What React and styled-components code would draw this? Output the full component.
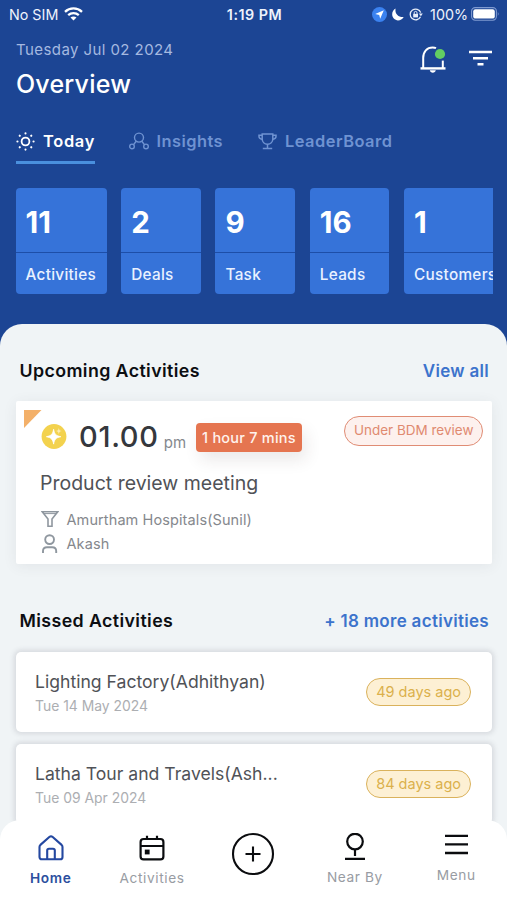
/**
 * External dependencies
 */
import styled, { createGlobalStyle } from 'styled-components';

const GlobalStyle = createGlobalStyle`
  * {
    box-sizing: border-box;
  }

  body {
    margin: 0;
    font-family: Inter, 'Liberation Sans', sans-serif;
    overflow: hidden;
  }

  svg {
    display: block;
    flex: none;
  }
`;

const Screen = styled.div`
  position: relative;
  display: flex;
  flex-direction: column;
  width: 507px;
  height: 900px;
  overflow: hidden;
  background: #1c4594;
`;

const StatusBar = styled.div`
  display: grid;
  grid-template-columns: 1fr auto 1fr;
  align-items: center;
  height: 28px;
  flex: none;
  padding: 0 7px 0 9px;
  color: #eef3fc;
  font-size: 14.3px;
`;

const StatusGroup = styled.div`
  display: flex;
  align-items: center;
  gap: ${({ $gap }) => $gap}px;
  justify-content: ${({ $end }) => ($end ? 'flex-end' : 'flex-start')};
`;

const Clock = styled.span`
  font-weight: 600;
  letter-spacing: 0.5px;
`;

const BatteryLevel = styled.span`
  margin: 0 -2px 0 2px;
`;

const Header = styled.header`
  display: flex;
  justify-content: space-between;
  flex: none;
  height: 92px;
  padding: 12px 15px 0 16px;
`;

const Today = styled.div`
  color: #a5b9e0;
  font-size: 15px;
  line-height: 20px;
  letter-spacing: 0.42px;
`;

const Title = styled.h1`
  margin: 8px 0 0;
  color: #fff;
  font-size: 25px;
  line-height: 32px;
  font-weight: 500;
  letter-spacing: 0.2px;
`;

const HeaderActions = styled.div`
  display: flex;
  align-items: flex-start;
  gap: 23px;
  padding-top: 5px;
`;

const Tabs = styled.nav`
  display: flex;
  flex: none;
  height: 44px;
  padding-left: 16px;
`;

const Tab = styled.div`
  display: flex;
  align-items: center;
  gap: ${({ $gap }) => $gap}px;
  height: 44px;
  margin-right: ${({ $space }) => $space}px;
  border-bottom: 3px solid ${({ $active }) => ($active ? '#4a90de' : 'transparent')};
  padding-top: 1px;
  color: ${({ $active }) => ($active ? '#fff' : '#6f93d2')};
  font-size: 16.4px;
  font-weight: 600;
  letter-spacing: ${({ $spacing }) => $spacing}px;
`;

const Stats = styled.div`
  display: flex;
  flex: none;
  gap: 14.7px;
  margin: 24px 14.5px 0 15.5px;
  overflow: hidden;
`;

const Stat = styled.div`
  flex: none;
  width: ${({ $width }) => $width}px;
  height: 106px;
  border-radius: 4px;
  background: #3673d9;
  color: #fff;
`;

const StatValue = styled.div`
  height: 65px;
  padding: 2px 0 0 10px;
  border-bottom: 1px solid #1d4ea8;
  font-size: 29.5px;
  line-height: 65px;
  font-weight: 700;
`;

const StatLabel = styled.div`
  padding-left: 10px;
  color: #e9f1ff;
  font-size: 15.3px;
  line-height: 43px;
  font-weight: 500;
  letter-spacing: 0.3px;
  white-space: nowrap;
`;

const Sheet = styled.main`
  flex: 1;
  margin-top: 30px;
  padding: 0 15px 0 15.5px;
  border-radius: 22px 22px 0 0;
  background: #f0f4f6;
`;

const SectionHeader = styled.div`
  display: flex;
  align-items: center;
  justify-content: space-between;
  height: ${({ $height }) => $height}px;
  padding: ${({ $top }) => $top}px 3px 0 4px;
`;

const SectionTitle = styled.h2`
  margin: 0;
  color: #0c0e12;
  font-size: 17.8px;
  font-weight: 600;
  letter-spacing: 0.4px;
`;

const SectionLink = styled.a`
  padding-top: 2px;
  color: #3c73cc;
  font-size: 17px;
  font-weight: 600;
  letter-spacing: 0.3px;
`;

const MeetingCard = styled.article`
  position: relative;
  height: 163px;
  padding: 21px 9px 0 24.5px;
  background: #fff;
  border-radius: 2px;
  box-shadow: 0 2px 14px rgba(60, 60, 80, 0.08);
`;

const Corner = styled.svg`
  position: absolute;
  top: 9px;
  left: 8.5px;
`;

const MeetingTop = styled.div`
  display: flex;
  align-items: center;
  height: 29px;
`;

const Time = styled.div`
  margin-left: 12px;
  color: #35383d;
  font-size: 29px;
  font-weight: 500;
  letter-spacing: 0.7px;
`;

const Meridiem = styled.span`
  margin: 11px 10px 0 5px;
  color: #85888d;
  font-size: 15px;
`;

const Countdown = styled.div`
  height: 29px;
  margin-top: 2px;
  padding: 0 6px;
  border-radius: 4px;
  background: #e57550;
  box-shadow: 4px 8px 16px rgba(60, 40, 40, 0.1);
  color: #fff2ec;
  font-size: 14.5px;
  line-height: 29px;
  font-weight: 500;
  letter-spacing: 0.23px;
  white-space: nowrap;
`;

const ReviewPill = styled.div`
  height: 30px;
  margin: -11px 0 0 auto;
  padding: 0 8.5px;
  border: 1.5px solid #e08c74;
  border-radius: 15px;
  background: #fdf1ee;
  color: #e08a70;
  font-size: 13.5px;
  line-height: 27px;
  white-space: nowrap;
`;

const MeetingTitle = styled.div`
  margin: 20px 0 12px;
  color: #505257;
  font-size: 19.5px;
  line-height: 24px;
`;

const Detail = styled.div`
  display: flex;
  align-items: center;
  gap: 7.5px;
  height: 24.5px;
  padding-left: 1px;
  color: #85888d;
  font-size: 14.5px;
  letter-spacing: 0.1px;
`;

const MissedCard = styled.article`
  display: flex;
  align-items: center;
  justify-content: space-between;
  height: 80px;
  margin-bottom: 12px;
  padding: 0 21px 0 19.5px;
  border-radius: 5px;
  background: #fff;
  box-shadow: 0 0 5px 2px rgba(70, 70, 85, 0.15);
`;

const MissedName = styled.div`
  padding-top: 2px;
  color: #505257;
  font-size: 17.6px;
  line-height: 24px;
`;

const MissedDate = styled.div`
  margin-top: 1px;
  color: #acaeb2;
  font-size: 13.9px;
  line-height: 22px;
`;

const AgePill = styled.div`
  height: 28px;
  padding: 0 9px;
  border: 1.5px solid #dab25c;
  border-radius: 14px;
  background: #fdf0d4;
  color: #dbb04c;
  font-size: 14.5px;
  line-height: 25px;
  white-space: nowrap;
`;

const BottomBar = styled.nav`
  position: absolute;
  right: 0;
  bottom: 0;
  left: 0;
  display: grid;
  grid-template-columns: repeat(5, 101.4px);
  height: 80px;
  border-radius: 20px 20px 0 0;
  background: #fff;
`;

const BarItem = styled.div`
  display: flex;
  flex-direction: column;
  align-items: center;
  padding-top: ${({ $top }) => $top}px;
  color: ${({ $active }) => ($active ? '#2c4f9e' : '#989ca3')};
  font-size: 13.7px;
  line-height: 18px;
  font-weight: ${({ $active }) => ($active ? 600 : 400)};
  letter-spacing: 0.6px;
`;

const BarLabel = styled.span`
  margin-top: ${({ $gap }) => $gap}px;
`;

const stats = [
  { label: 'Activities', value: 11, width: 91 },
  { label: 'Deals', value: 2, width: 79.6 },
  { label: 'Task', value: 9, width: 79.6 },
  { label: 'Leads', value: 16, width: 79.6 },
  { label: 'Customers', value: 1, width: 102 },
];

const missed = [
  { name: 'Lighting Factory(Adhithyan)', date: 'Tue 14 May 2024', age: '49 days ago' },
  { name: 'Latha Tour and Travels(Ash...', date: 'Tue 09 Apr 2024', age: '84 days ago' },
];

function WifiIcon() {
  return (
    <svg width="19" height="14" viewBox="0 0 19 14" fill="none" stroke="#fff" strokeWidth="2.3">
      <path d="M1 4.8C5.8 0.3 13.2 0.3 18 4.8" />
      <path d="M4.2 8.2C7.2 5.5 11.8 5.5 14.8 8.2" />
      <path d="M9.5 13.6L6.5 10.6C8.2 9.1 10.8 9.1 12.5 10.6Z" fill="#fff" stroke="none" />
    </svg>
  );
}

function LocationIcon() {
  return (
    <svg width="15" height="15" viewBox="0 0 15 15">
      <circle cx="7.5" cy="7.5" r="7.5" fill="#3b82f0" />
      <path d="M11.8 3.2L8.2 11.8L7.2 7.9L3.2 6.9Z" fill="#fff" />
    </svg>
  );
}

function MoonIcon() {
  return (
    <svg width="12" height="13" viewBox="0 0 12 13">
      <path d="M3.6 0.6C2.6 5.4 6.2 9.6 11.7 9C9.7 12.7 4.6 13.6 1.8 10.6C-1 7.4 0 2.4 3.6 0.6Z" fill="#fff" />
    </svg>
  );
}

function RotationLockIcon() {
  return (
    <svg width="14" height="13" viewBox="0 0 14 13" fill="none" stroke="#e6edf9" strokeWidth="1.3">
      <path d="M11.5 8.8A5.4 5.4 0 1 1 11.7 4.6" />
      <path d="M9.9 5.6H13.8L11.9 8.2Z" fill="#e6edf9" stroke="none" />
      <rect x="4.2" y="5.9" width="4.8" height="3.5" fill="#e6edf9" stroke="none" />
      <path d="M5.2 6V4.8A1.4 1.4 0 0 1 8 4.8V6" strokeWidth="1" />
    </svg>
  );
}

function BatteryIcon() {
  return (
    <svg width="29" height="14" viewBox="0 0 29 14">
      <rect x="0.6" y="0.6" width="24.8" height="12.6" rx="3.6" fill="none" stroke="#7f9ad0" strokeWidth="1.1" />
      <rect x="2.2" y="2.2" width="21.6" height="9.4" rx="2.2" fill="#fff" />
      <path d="M26.8 4.7Q28.6 6.9 26.8 9.1Z" fill="#7f9ad0" />
    </svg>
  );
}

function BellIcon() {
  return (
    <svg width="26" height="29" viewBox="0 0 26 29" fill="none" stroke="#fff" strokeWidth="2">
      <path d="M3.2 23V13C3.2 6.6 7 2.6 12.6 2.6C14 2.6 15.2 2.8 16 3.2" />
      <path d="M22.8 15.6V23" />
      <path d="M0.5 23.4H25.5" strokeWidth="2.4" />
      <path d="M9.8 25.3H15.8C15.4 28.6 10.2 28.6 9.8 25.3Z" fill="#fff" stroke="none" />
      <circle cx="20" cy="9" r="5.1" fill="#62cd62" stroke="none" />
    </svg>
  );
}

function FilterIcon() {
  return (
    <svg width="23" height="29" viewBox="0 0 23 29" stroke="#fff" strokeWidth="2.5">
      <path d="M0 7H23M4 13.2H19M8.5 19.3H14.5" />
    </svg>
  );
}

function SunIcon() {
  return (
    <svg width="19" height="19" viewBox="0 0 19 19" fill="none" stroke="#fff" strokeWidth="1.8">
      <circle cx="9.5" cy="9.5" r="3.9" />
      <path
        d="M9.5 1.4V1.5M9.5 17.5V17.6M1.4 9.5H1.5M17.5 9.5H17.6M3.7 3.7L3.8 3.8M15.2 15.2L15.3 15.3M3.7 15.3L3.8 15.2M15.2 3.8L15.3 3.7"
        strokeWidth="2.1"
        strokeLinecap="round"
      />
    </svg>
  );
}

function InsightsIcon() {
  return (
    <svg width="20" height="18" viewBox="0 0 20 18" fill="none" stroke="#6f93d2" strokeWidth="1.4">
      <circle cx="10" cy="5.6" r="4.5" />
      <circle cx="3" cy="14.4" r="2.3" />
      <circle cx="17" cy="14.4" r="2.3" />
      <path d="M7.2 9.2L4.6 12.6M12.8 9.2L15.4 12.6" />
    </svg>
  );
}

function TrophyIcon() {
  return (
    <svg width="19" height="17" viewBox="0 0 19 17" fill="none" stroke="#6f93d2" strokeWidth="1.5">
      <path d="M4.2 1H14.8V6C14.8 9.2 12.4 11.2 9.5 11.2C6.6 11.2 4.2 9.2 4.2 6Z" />
      <path d="M4 2.2H1V3.6C1 5.2 2.2 6 4 6.2M15 2.2H18V3.6C18 5.2 16.8 6 15 6.2M9.5 11.2V15.4M4.8 15.6H14.2" />
    </svg>
  );
}

function SparkIcon() {
  return (
    <svg width="27" height="26" viewBox="0 0 27 26">
      <circle cx="14" cy="12.5" r="12.4" fill="#f3d24e" />
      <path d="M13.6 5.3C14.4 10.1 16 11.8 20.8 12.7C16 13.6 14.4 15.3 13.6 20.1C12.8 15.3 11.2 13.6 6.4 12.7C11.2 11.8 12.8 10.1 13.6 5.3Z" fill="#fff" stroke="#fff" strokeWidth="0.8" />
      <path d="M18.8 4C19.2 6.1 19.8 6.7 21.9 7.1C19.8 7.5 19.2 8.1 18.8 10.2C18.4 8.1 17.8 7.5 15.7 7.1C17.8 6.7 18.4 6.1 18.8 4Z" fill="#fbecb0" />
    </svg>
  );
}

function FunnelIcon() {
  return (
    <svg width="18" height="18" viewBox="0 0 18 18" fill="none" stroke="#8f979f" strokeWidth="1.6">
      <path d="M1.3 1.8H16.7L11 9V16.2H7V9Z" />
      <path d="M3 3.6H15" strokeWidth="1" />
    </svg>
  );
}

function PersonIcon() {
  return (
    <svg width="18" height="20" viewBox="0 0 18 20" fill="none" stroke="#8f979f" strokeWidth="1.9">
      <circle cx="8.6" cy="5.6" r="4.4" />
      <path d="M2 19V17C2 14.4 3.6 13.2 6 13.2H11.2C13.6 13.2 15.2 14.4 15.2 17V19" />
    </svg>
  );
}

function HomeIcon() {
  return (
    <svg width="26" height="26" viewBox="0 0 26 26" fill="none" stroke="#2448a0" strokeWidth="2.1" strokeLinejoin="round">
      <path d="M1.5 11.9C1.5 11.1 1.8 10.5 2.4 9.9L11.6 1.8C12.5 1.1 13.5 1.1 14.4 1.8L23.6 9.9C24.2 10.5 24.5 11.1 24.5 11.9V22C24.5 23.4 23.6 24.3 22.2 24.3H3.8C2.4 24.3 1.5 23.4 1.5 22Z" />
      <path d="M9.2 24V15.6C9.2 14.4 9.8 13.8 11 13.8H15C16.2 13.8 16.8 14.4 16.8 15.6V24" />
    </svg>
  );
}

function CalendarIcon() {
  return (
    <svg width="26" height="26" viewBox="0 0 26 26" fill="none" stroke="#0b0c0f" strokeWidth="2.2">
      <rect x="1.6" y="4" width="22.8" height="20.4" rx="3" />
      <path d="M1.6 11H24.4M8 0.8V4M18 0.8V4" />
      <rect x="5.8" y="14.6" width="4.8" height="4.8" fill="#0b0c0f" stroke="none" />
    </svg>
  );
}

function AddIcon() {
  return (
    <svg width="44" height="44" viewBox="0 0 44 44" fill="none" stroke="#0b0c0f" strokeWidth="2.1">
      <circle cx="22" cy="22" r="20" />
      <path d="M22 14.5V29.5M14.5 22H29.5" />
    </svg>
  );
}

function NearByIcon() {
  return (
    <svg width="20" height="28" viewBox="0 0 20 28" fill="none" stroke="#0b0c0f" strokeWidth="2.2">
      <circle cx="10" cy="8.6" r="7.8" />
      <path d="M10 16.6V23M0 25.9H20" />
    </svg>
  );
}

function MenuIcon() {
  return (
    <svg width="23" height="21" viewBox="0 0 23 21" stroke="#0b0c0f" strokeWidth="2.3">
      <path d="M0 1.8H23M0 10.4H23M0 19H23" />
    </svg>
  );
}

function Status() {
  return (
    <StatusBar>
      <StatusGroup $gap={6}>
        <span>No SIM</span>
        <WifiIcon />
      </StatusGroup>
      <Clock>1:19 PM</Clock>
      <StatusGroup $gap={5} $end>
        <LocationIcon />
        <MoonIcon />
        <RotationLockIcon />
        <BatteryLevel>100%</BatteryLevel>
        <BatteryIcon />
      </StatusGroup>
    </StatusBar>
  );
}

function UpcomingMeeting() {
  return (
    <MeetingCard>
      <Corner width="18" height="18" viewBox="0 0 18 18">
        <path d="M0 0H17.5L0 18Z" fill="#f3b069" />
      </Corner>
      <MeetingTop>
        <SparkIcon />
        <Time>01.00</Time>
        <Meridiem>pm</Meridiem>
        <Countdown>1 hour 7 mins</Countdown>
        <ReviewPill>Under BDM review</ReviewPill>
      </MeetingTop>
      <MeetingTitle>Product review meeting</MeetingTitle>
      <Detail>
        <FunnelIcon />
        Amurtham Hospitals(Sunil)
      </Detail>
      <Detail>
        <PersonIcon />
        Akash
      </Detail>
    </MeetingCard>
  );
}

function Navigation() {
  return (
    <BottomBar>
      <BarItem $top={15} $active>
        <HomeIcon />
        <BarLabel $gap={8}>Home</BarLabel>
      </BarItem>
      <BarItem $top={15}>
        <CalendarIcon />
        <BarLabel $gap={8}>Activities</BarLabel>
      </BarItem>
      <BarItem $top={12}>
        <AddIcon />
      </BarItem>
      <BarItem $top={13}>
        <NearByIcon />
        <BarLabel $gap={7}>Near By</BarLabel>
      </BarItem>
      <BarItem $top={14}>
        <MenuIcon />
        <BarLabel $gap={11}>Menu</BarLabel>
      </BarItem>
    </BottomBar>
  );
}

function App() {
  return (
    <>
      <GlobalStyle />
      <Screen>
        <Status />
        <Header>
          <div>
            <Today>Tuesday Jul 02 2024</Today>
            <Title>Overview</Title>
          </div>
          <HeaderActions>
            <BellIcon />
            <FilterIcon />
          </HeaderActions>
        </Header>
        <Tabs>
          <Tab $gap={8} $space={34} $spacing={0.7} $active>
            <SunIcon />
            Today
          </Tab>
          <Tab $gap={7.5} $space={35} $spacing={0.45}>
            <InsightsIcon />
            Insights
          </Tab>
          <Tab $gap={8} $space={0} $spacing={0.5}>
            <TrophyIcon />
            LeaderBoard
          </Tab>
        </Tabs>
        <Stats>
          {stats.map(({ label, value, width }) => (
            <Stat key={label} $width={width}>
              <StatValue>{value}</StatValue>
              <StatLabel>{label}</StatLabel>
            </Stat>
          ))}
        </Stats>
        <Sheet>
          <SectionHeader $height={77} $top={15}>
            <SectionTitle>Upcoming Activities</SectionTitle>
            <SectionLink>View all</SectionLink>
          </SectionHeader>
          <UpcomingMeeting />
          <SectionHeader $height={88} $top={24}>
            <SectionTitle>Missed Activities</SectionTitle>
            <SectionLink>+ 18 more activities</SectionLink>
          </SectionHeader>
          {missed.map(({ name, date, age }) => (
            <MissedCard key={name}>
              <div>
                <MissedName>{name}</MissedName>
                <MissedDate>{date}</MissedDate>
              </div>
              <AgePill>{age}</AgePill>
            </MissedCard>
          ))}
        </Sheet>
        <Navigation />
      </Screen>
    </>
  );
}

export default App;
